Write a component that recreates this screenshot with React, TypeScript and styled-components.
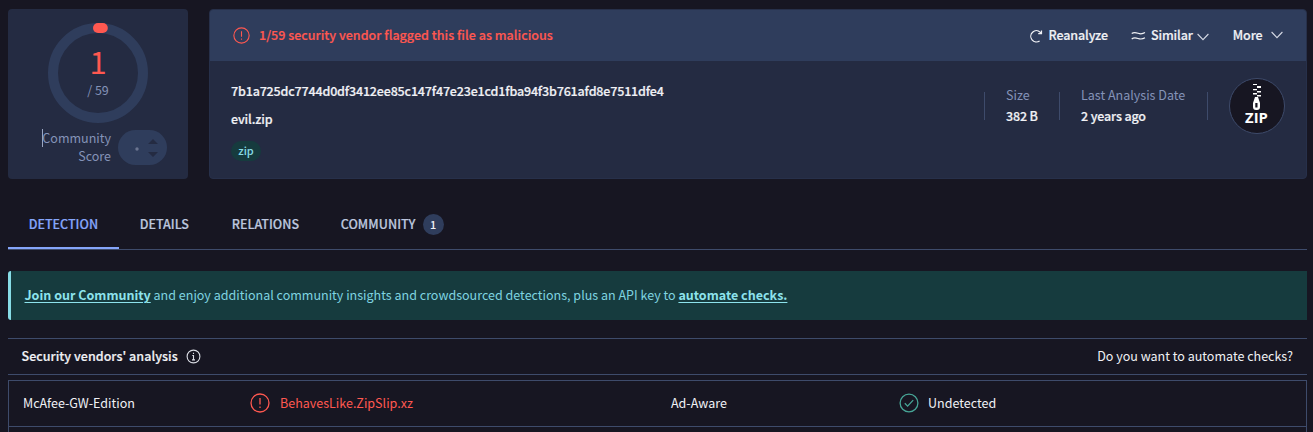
import React from "react";
import styled, { createGlobalStyle } from "styled-components";

const c = {
  bg: "#171622",
  card: "#242b42",
  raised: "#2f3d5c",
  line: "#3e4b6b",
  red: "#ff5850",
  muted: "#8493b8",
  text: "#f0f1f5",
  teal: "#87dce6",
  tealBg: "#163b3e",
  accent: "#85a5fa",
};

const GlobalStyle = createGlobalStyle`
  *, *::before, *::after { box-sizing: border-box; }
  html, body { margin: 0; height: 432px; overflow: hidden; background: ${c.bg}; }
  body { font: 12.53px/18px "Noto Sans CJK SC", "Noto Sans", sans-serif; color: ${c.text}; }
  svg { display: block; flex: none; }
`;

const Label = styled.span<{ $strong?: boolean; $color?: string; $spacing?: number }>`
  font-weight: ${(p) => (p.$strong ? 500 : 400)};
  -webkit-text-stroke: ${(p) => (p.$strong ? 0.2 : 0)}px;
  color: ${(p) => p.$color ?? "inherit"};
  letter-spacing: ${(p) => p.$spacing ?? 0}px;
  white-space: nowrap;
`;

const Page = styled.main`
  width: 1313px;
  height: 432px;
  padding: 9px 6px 0 8px;
  overflow: hidden;
`;

const Summary = styled.section`
  display: flex;
  gap: 21px;
  height: 170px;
`;

const ScoreCard = styled.div`
  width: 180px;
  padding-top: 14px;
  border-radius: 4px;
  background: ${c.card};
`;

const Dial = styled.div`
  display: grid;
  width: 100px;
  height: 100px;
  margin-left: 40px;
  > * { grid-area: 1 / 1; }
`;

const DialText = styled.div`
  display: flex;
  flex-direction: column;
  align-items: center;
  padding-top: 20px;
`;

const DialCount = styled.div`
  font-size: 31px;
  line-height: 36px;
  color: ${c.red};
`;

const DialTotal = styled.div`
  margin-top: 2px;
  line-height: 18px;
  color: ${c.muted};
`;

const Community = styled.div`
  display: flex;
  align-items: center;
  margin-top: 5px;
  padding-left: 33px;
  gap: 7px;
`;

const CommunityLabel = styled.div`
  width: 70px;
  height: 38px;
  padding-top: 1px;
  text-align: right;
  white-space: nowrap;
  color: ${c.muted};
`;

const Caret = styled.span`
  display: inline-block;
  width: 1px;
  height: 18px;
  margin-right: -1px;
  background: #9aa6c2;
  vertical-align: top;
`;

const Stepper = styled.div`
  display: flex;
  align-items: center;
  justify-content: space-between;
  width: 49px;
  height: 35px;
  margin-top: 1px;
  padding: 0 8px 0 16.5px;
  border-radius: 18px;
  background: ${c.raised};
  > svg:first-child { margin-top: 3px; }
`;

const FileCard = styled.div`
  flex: 1;
  border: 1px solid #27304a;
  border-radius: 4px;
  overflow: hidden;
  background: ${c.card};
`;

const AlertBar = styled.div`
  display: flex;
  align-items: center;
  height: 51px;
  padding: 0 23px 1px;
  background: ${c.raised};
`;

const Alert = styled.div`
  display: flex;
  align-items: center;
  gap: 9px;
`;

const Actions = styled.div`
  display: flex;
  margin-left: auto;
  gap: 23.5px;
`;

const Action = styled.div<{ $gap: number; $drop?: number }>`
  display: flex;
  align-items: center;
  gap: ${(p) => p.$gap}px;
  > svg:first-child { margin-top: 1px; }
  > svg:last-child { margin-top: ${(p) => p.$drop ?? 0}px; }
`;

const FileBody = styled.div`
  display: flex;
  justify-content: space-between;
  padding: 17px 21px 0 21px;
`;

const FileNames = styled.div`
  display: flex;
  flex-direction: column;
  align-items: flex-start;
  padding-top: 4px;
  gap: 10px;
`;

const Tag = styled.div`
  display: flex;
  justify-content: center;
  width: 30px;
  height: 20px;
  margin-top: 3px;
  border-radius: 10px;
  font-size: 11px;
  font-weight: 500;
  line-height: 19px;
  color: ${c.teal};
  background: ${c.tealBg};
`;

const Facts = styled.div`
  display: flex;
  align-items: flex-start;
`;

const Rule = styled.div`
  width: 1px;
  height: 28px;
  margin-top: 14px;
  background: ${c.line};
`;

const Fact = styled.div<{ $width: number }>`
  display: flex;
  flex-direction: column;
  width: ${(p) => p.$width}px;
  padding: 8px 0 0 21px;
  gap: 3px;
`;

const Tabs = styled.nav`
  display: flex;
  height: 51px;
  margin-top: 20px;
  border-bottom: 1px solid ${c.line};
`;

const Tab = styled.div<{ $active?: boolean; $width?: number }>`
  display: flex;
  align-items: center;
  gap: 7px;
  width: ${(p) => (p.$width ? p.$width + "px" : "auto")};
  padding: 2px 0 0 20.7px;
  border-bottom: 2px solid ${(p) => (p.$active ? c.accent : "transparent")};
  color: ${(p) => (p.$active ? c.accent : "#bcc6de")};
`;

const Count = styled.span`
  width: 21px;
  height: 21px;
  border-radius: 50%;
  text-align: center;
  font-size: 11px;
  font-weight: 500;
  line-height: 21px;
  color: ${c.text};
  background: ${c.raised};
`;

const Banner = styled.div`
  height: 49px;
  margin-top: 21px;
  padding-left: 13.5px;
  border-left: 3px solid ${c.teal};
  border-radius: 3px 0 0 3px;
  line-height: 47px;
  letter-spacing: 0.005px;
  color: #7fd4e0;
  background: ${c.tealBg};
  white-space: nowrap;
`;

const Link = styled.a`
  font-weight: 700;
  color: #8de3ec;
  text-decoration: underline;
  text-decoration-thickness: 1px;
  text-underline-offset: 2px;
`;

const TableHead = styled.div`
  display: flex;
  align-items: center;
  height: 37px;
  margin-top: 18px;
  padding: 0 14px 1px 13.5px;
  gap: 8px;
  border: solid ${c.line};
  border-width: 1px 0;
  > :last-child { margin-left: auto; }
`;

const Table = styled.div`
  height: 80px;
  margin-top: 5px;
  border: 1px solid ${c.line};
`;

const Row = styled.div`
  display: grid;
  grid-template-columns: 227px 421px 228px 1fr;
  align-items: center;
  height: 46px;
  padding: 0 0 1px 14px;
  border-bottom: 1px solid ${c.line};
`;

const Result = styled.div<{ $color?: string; $gap?: number }>`
  display: flex;
  align-items: center;
  gap: ${(p) => p.$gap ?? 10}px;
  color: ${(p) => p.$color ?? c.text};
`;

const AlertIcon = ({ size = 17 }: { size?: number }) => (
  <svg width={size} height={size} viewBox="0 0 20 20" fill="none" stroke={c.red} strokeWidth="1.3">
    <circle cx="10" cy="10" r="9" />
    <path d="M10 5v6.5M10 13.5v1.5" />
  </svg>
);

const CheckIcon = () => (
  <svg width="20" height="20" viewBox="0 0 20 20" fill="none" stroke="#47a596" strokeWidth="1.3">
    <circle cx="10" cy="10" r="8.9" />
    <path d="M5.8 10.3l2.8 2.8 5.6-6" />
  </svg>
);

const InfoIcon = () => (
  <svg width="15" height="15" viewBox="0 0 15 15" fill="none" stroke="#dcdee6" strokeWidth="1.1">
    <circle cx="7.5" cy="7.5" r="6.4" />
    <path d="M7.5 3.8v1.3M6.3 6.5h1.2v4.2M6 10.9h3" />
  </svg>
);

const ReloadIcon = () => (
  <svg width="14" height="14" viewBox="0 0 14 14" fill="none" stroke={c.text} strokeWidth="1.2">
    <path d="M10.6 11.9A5.6 5.6 0 1 1 11.2 3.2L12.3 4.4M12.5 1.4v3.3H9.2" />
  </svg>
);

const SimilarIcon = () => (
  <svg width="15" height="10" viewBox="0 0 15 10" fill="none" stroke={c.text} strokeWidth="1.2">
    <path d="M.7 2.6C3 1 4.7 1.5 7 2.3s4.2 1 7-.7M.7 8C3 6.2 4.7 6.7 7 7.5s4.2 1 7-.7" />
  </svg>
);

const Chevron = () => (
  <svg width="12" height="8" viewBox="0 0 12 8" fill="none" stroke="#d5d9e4" strokeWidth="1.1">
    <path d="M.6 1L6 6.6 11.4 1" />
  </svg>
);

const StepArrows = () => (
  <svg width="12" height="20" viewBox="0 0 12 20" fill={c.card}>
    <path d="M1 6L6 1l5 5zM1 14h10l-5 5z" />
  </svg>
);

const ZipIcon = () => (
  <svg width="56" height="56" viewBox="0 0 56 56">
    <circle cx="28" cy="28" r="27.5" fill={c.bg} stroke={c.line} />
    <g fill="#fff">
      <path d="M24 6h4v1h-4zM28 8h4v2h-4zM24 11h4v1.3h-4zM28 13h4v1.4h-4zM24 15h4v1.4h-4zM28 17h4v1.5h-4z" />
      <path fillRule="evenodd" d="M26 19h3l2 6v4a3 3 0 0 1-3 3h-1a3 3 0 0 1-3-3v-4zM26.3 25v4.5h2.2V25z" />
    </g>
    <text x="27.5" y="45" textAnchor="middle" fill="#fff" fontFamily="Open Sans" fontWeight="700" fontSize="14.8">ZIP</text>
  </svg>
);

export default function App() {
  return (
    <Page>
      <GlobalStyle />
      <Summary>
        <ScoreCard>
          <Dial>
            <svg width="100" height="100" viewBox="0 0 100 100">
              <circle cx="50" cy="50" r="45" fill="none" stroke={c.raised} strokeWidth="10" />
              <path d="M50 5h4.8" stroke={c.red} strokeWidth="10" strokeLinecap="round" />
            </svg>
            <DialText>
              <DialCount>1</DialCount>
              <DialTotal>/ 59</DialTotal>
            </DialText>
          </Dial>
          <Community>
            <CommunityLabel><Caret />Community<br />Score</CommunityLabel>
            <Stepper>
              <svg width="4" height="4"><circle cx="2" cy="2" r="1.7" fill="#6b7590" /></svg>
              <StepArrows />
            </Stepper>
          </Community>
        </ScoreCard>
        <FileCard>
          <AlertBar>
            <Alert>
              <AlertIcon />
              <Label $strong $color={c.red} $spacing={0.02}>1/59 security vendor flagged this file as malicious</Label>
            </Alert>
            <Actions>
              <Action $gap={6}><ReloadIcon /><Label $strong $spacing={-0.12}>Reanalyze</Label></Action>
              <Action $gap={4.5} $drop={3}><SimilarIcon /><Label $strong $spacing={-0.12}>Similar</Label><Chevron /></Action>
              <Action $gap={8.5}><Label $strong $spacing={-0.1}>More</Label><Chevron /></Action>
            </Actions>
          </AlertBar>
          <FileBody>
            <FileNames>
              <Label $strong $spacing={-0.17}>7b1a725dc7744d0df3412ee85c147f47e23e1cd1fba94f3b761afd8e7511dfe4</Label>
              <Label $strong $spacing={-0.15}>evil.zip</Label>
              <Tag>zip</Tag>
            </FileNames>
            <Facts>
              <Rule />
              <Fact $width={74}>
                <Label $color={c.muted}>Size</Label>
                <Label $strong $spacing={-0.15}>382 B</Label>
              </Fact>
              <Rule />
              <Fact $width={147}>
                <Label $color={c.muted}>Last Analysis Date</Label>
                <Label $strong $spacing={-0.15}>2 years ago</Label>
              </Fact>
              <Rule />
              <Fact $width={21} />
              <ZipIcon />
            </Facts>
          </FileBody>
        </FileCard>
      </Summary>
      <Tabs>
        <Tab $active $width={111}><Label $strong>DETECTION</Label></Tab>
        <Tab $width={92}><Label $strong>DETAILS</Label></Tab>
        <Tab $width={109}><Label $strong>RELATIONS</Label></Tab>
        <Tab><Label $strong $spacing={0.05}>COMMUNITY</Label><Count>1</Count></Tab>
      </Tabs>
      <Banner>
        <Link>Join our Community</Link>
        {" and enjoy additional community insights and crowdsourced detections, plus an API key to "}
        <Link>automate checks.</Link>
      </Banner>
      <TableHead>
        <Label $strong $spacing={0.03}>Security vendors' analysis</Label>
        <InfoIcon />
        <Label>Do you want to automate checks?</Label>
      </TableHead>
      <Table>
        <Row>
          <Label>McAfee-GW-Edition</Label>
          <Result $color={c.red}><AlertIcon size={20} /><Label>BehavesLike.ZipSlip.xz</Label></Result>
          <Label>Ad-Aware</Label>
          <Result $gap={9}><CheckIcon /><Label>Undetected</Label></Result>
        </Row>
      </Table>
    </Page>
  );
}
